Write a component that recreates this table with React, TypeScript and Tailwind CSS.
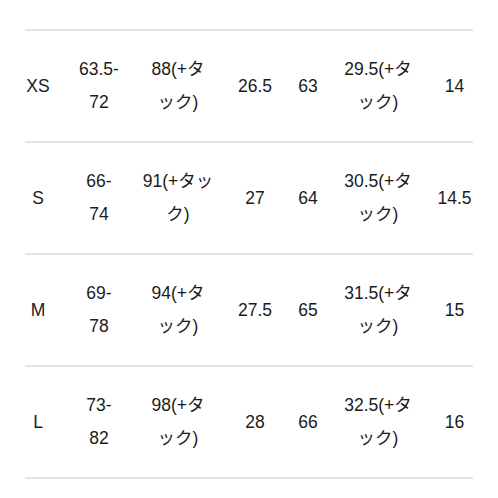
const rows: string[][][] = [
  [["XS"], ["63.5-", "72"], ["88(+タ", "ック)"], ["26.5"], ["63"], ["29.5(+タ", "ック)"], ["14"]],
  [["S"], ["66-", "74"], ["91(+タッ", "ク)"], ["27"], ["64"], ["30.5(+タ", "ック)"], ["14.5"]],
  [["M"], ["69-", "78"], ["94(+タ", "ック)"], ["27.5"], ["65"], ["31.5(+タ", "ック)"], ["15"]],
  [["L"], ["73-", "82"], ["98(+タ", "ック)"], ["28"], ["66"], ["32.5(+タ", "ック)"], ["16"]],
];

export default function App() {
  return (
    <div
      className="w-[498px] h-[498px] bg-white pt-[29px] px-[25px] text-[#1c1c1c] text-[17.5px] leading-[33px]"
      style={{ fontFamily: '"Liberation Sans", "Noto Sans CJK JP", sans-serif' }}
    >
      <div className="border-b-2 border-[#e4e4e4]">
        {rows.map((row, i) => (
          <div
            key={i}
            className="grid grid-cols-[26px_96px_62px_89px_20px_120px_33px] h-[112px] border-t-2 border-[#e4e4e4]"
          >
            {row.map((cell, j) => (
              <div
                key={j}
                className={
                  j === 3
                    ? "flex flex-col items-center justify-center pl-[3px]"
                    : "flex flex-col items-center justify-center"
                }
              >
                {cell.map((line, k) => (
                  <div key={k} className="whitespace-nowrap">
                    {line}
                  </div>
                ))}
              </div>
            ))}
          </div>
        ))}
      </div>
    </div>
  );
}
